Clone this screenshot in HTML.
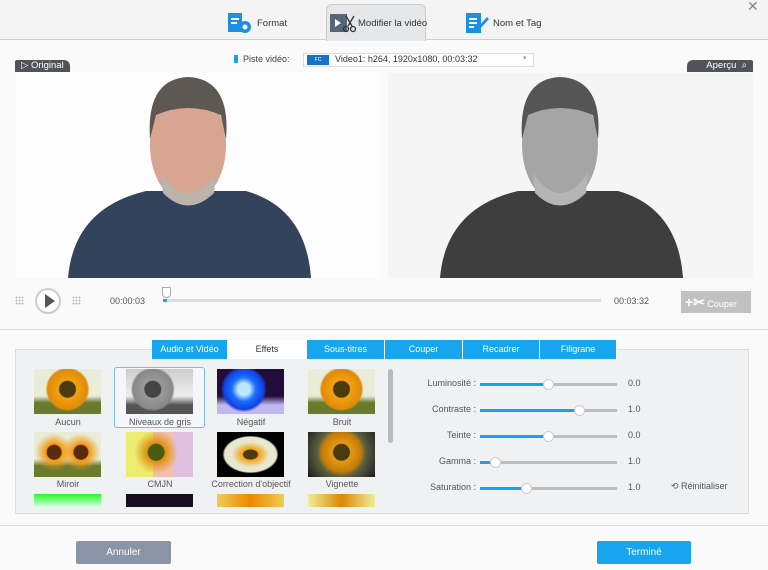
<!DOCTYPE html>
<html><head><meta charset="utf-8"><style>
*{margin:0;padding:0;box-sizing:border-box}
body{width:768px;height:570px;overflow:hidden;background:#fafafa;font-family:"Liberation Sans",sans-serif;font-size:10px;color:#444;position:relative}
.a{position:absolute}
.top{left:0;top:0;width:768px;height:40px;background:#f4f4f4;border-bottom:1px solid #cfcfcf}
.tab{top:5px;height:36px;font-size:9.5px;color:#333;display:flex;align-items:center}
.lab{background:#505358;color:#fff;font-size:9.5px;height:12px;line-height:12px;padding:0 6px}
.thumb{width:67px;height:45px;overflow:hidden}
.tl{width:92px;text-align:center;font-size:9px;color:#555}
.btab{top:340px;height:19px;background:#17a5f0;color:#fff;font-size:9px;text-align:center;line-height:19px;border-right:1px solid #fff}
.sl{height:3px;background:#bdbdbd;width:137px;left:480px}
.sf{height:3px;background:#1ba1f0;left:0;top:0}
.kn{width:11px;height:11px;border-radius:50%;background:#fff;border:1px solid #ccc;top:-4px}
.lb{left:380px;width:96px;text-align:right;font-size:9px;color:#555}
.v{left:628px;font-size:9px;color:#555}
</style></head><body>
<div class="a top"></div>
<div class="a" style="left:326px;top:4px;width:100px;height:37px;background:#e6e7e9;border:1px solid #ccc;border-bottom:none;border-radius:6px 6px 0 0"></div>
<div class="a tab" style="left:227px"><svg width="26" height="22"><rect x="1" y="1" width="14" height="19" fill="#1c8fe0"/><rect x="4" y="6" width="8" height="2" fill="#fff"/><rect x="4" y="10" width="6" height="2" fill="#fff"/><circle cx="18" cy="15" r="6" fill="#1c8fe0"/><circle cx="18" cy="15" r="2.5" fill="#fff"/></svg><span style="margin-left:4px">Format</span></div>
<div class="a tab" style="left:329px"><svg width="28" height="22"><rect x="1" y="2" width="17" height="18" fill="#56657a"/><path d="M6 7l6 4-6 4z" fill="#fff"/><circle cx="17" cy="17" r="2.5" fill="none" stroke="#333" stroke-width="1.3"/><circle cx="24" cy="17" r="2.5" fill="none" stroke="#333" stroke-width="1.3"/><path d="M17 4l6 10M25 4l-6 10" stroke="#333" stroke-width="1.3"/></svg><span style="margin-left:1px">Modifier la vidéo</span></div>
<div class="a tab" style="left:465px"><svg width="26" height="22"><rect x="1" y="1" width="15" height="20" fill="#1c8fe0"/><rect x="4" y="6" width="8" height="2" fill="#fff"/><rect x="4" y="10" width="8" height="2" fill="#fff"/><rect x="4" y="14" width="5" height="2" fill="#fff"/><path d="M12 16l10-11 2 2-10 11z" fill="#1c8fe0"/></svg><span style="margin-left:2px">Nom et Tag</span></div>
<div class="a" style="left:747px;top:-2px;font-size:14px;color:#888">✕</div>

<div class="a lab" style="left:15px;top:60px;border-radius:2px 6px 0 0">▷ Original</div>
<div class="a lab" style="left:687px;top:60px;width:66px;border-radius:6px 2px 0 0;text-align:right">Aperçu &nbsp;⌕</div>
<div class="a" style="left:234px;top:55px;width:4px;height:8px;background:#1ba1f0"></div>
<div class="a" style="left:243px;top:54px;font-size:9px;color:#444">Piste vidéo:</div>
<div class="a" style="left:303px;top:53px;width:231px;height:14px;background:#fff;border:1px solid #ddd"></div>
<div class="a" style="left:307px;top:55px;width:22px;height:10px;background:#1573c8;color:#fff;font-size:5px;text-align:center;line-height:10px">FC</div>
<div class="a" style="left:335px;top:54px;font-size:9px;color:#333">Video1: h264, 1920x1080, 00:03:32</div>
<div class="a" style="left:523px;top:54px;font-size:7px;color:#999">▾</div>

<svg class="a" style="left:16px;top:73px" width="364" height="205"><rect width="364" height="205" fill="#fdfdfd"/><path d="M52 205 Q58 135 130 118 L230 118 Q290 135 295 205Z" fill="#33435c"/><ellipse cx="172" cy="72" rx="38" ry="58" fill="#d7a591"/><path d="M134 66 Q130 6 172 4 Q215 6 210 66 L205 42 Q172 28 140 42Z" fill="#5e5853"/><path d="M145 100 Q172 140 200 100 L198 120 Q172 145 147 120Z" fill="#bdb3aa"/></svg>
<svg class="a" style="left:388px;top:73px" width="365" height="205"><rect width="365" height="205" fill="#f5f5f5"/><path d="M52 205 Q58 135 130 118 L230 118 Q290 135 295 205Z" fill="#3e3e3e"/><ellipse cx="172" cy="72" rx="38" ry="58" fill="#a5a5a5"/><path d="M134 66 Q130 6 172 4 Q215 6 210 66 L205 42 Q172 28 140 42Z" fill="#555"/><path d="M145 100 Q172 140 200 100 L198 120 Q172 145 147 120Z" fill="#b5b5b5"/></svg>

<div class="a" style="left:15px;top:296px;width:9px;height:9px;background:radial-gradient(#bbb 1px,transparent 1px) 0 0/3px 3px"></div>
<div class="a" style="left:72px;top:296px;width:9px;height:9px;background:radial-gradient(#bbb 1px,transparent 1px) 0 0/3px 3px"></div>
<div class="a" style="left:35px;top:288px;width:26px;height:26px;border-radius:50%;background:#fff;border:2px solid #ccc"></div>
<div class="a" style="left:45px;top:294px;width:0;height:0;border-left:10px solid #555;border-top:7px solid transparent;border-bottom:7px solid transparent"></div>
<div class="a" style="left:110px;top:296px;font-size:9px;color:#555">00:00:03</div>
<div class="a" style="left:163px;top:299px;width:438px;height:3px;background:#ddd"></div>
<div class="a" style="left:163px;top:299px;width:4px;height:3px;background:#1ba1f0"></div>
<div class="a" style="left:162px;top:287px;width:9px;height:11px;background:#fff;border:1px solid #aaa;border-radius:0 0 4px 4px"></div>
<div class="a" style="left:614px;top:296px;font-size:9px;color:#555">00:03:32</div>
<div class="a" style="left:681px;top:291px;width:70px;height:22px;background:#c1c1c1;color:#fff;font-size:9px;line-height:22px;padding-left:4px"><b style="font-size:14px">+✂</b> Couper</div>
<div class="a" style="left:0;top:329px;width:768px;height:1px;background:#ddd"></div>

<div class="a" style="left:15px;top:349px;width:734px;height:165px;background:#f0f1f3;border:1px solid #ddd"></div>
<div class="a btab" style="left:152px;width:76px">Audio et Vidéo</div>
<div class="a btab" style="left:228px;width:79px;background:#fff;color:#333">Effets</div>
<div class="a btab" style="left:307px;width:78px">Sous-titres</div>
<div class="a btab" style="left:385px;width:78px">Couper</div>
<div class="a btab" style="left:463px;width:77px">Recadrer</div>
<div class="a btab" style="left:540px;width:77px">Filigrane</div>

<div class="a" style="left:114px;top:367px;width:91px;height:61px;border:1px solid #7fb6ee;border-radius:3px;background:#f4f6f9"></div>
<div class="a thumb" style="left:34px;top:369px;background:radial-gradient(circle at 50% 45%,#4a3a10 8px,#f2a20f 9px,#e08a0a 20px,transparent 22px),linear-gradient(#e8ecd8 60%,#6a7a2e 75%)"></div>
<div class="a thumb" style="left:126px;top:369px;background:radial-gradient(circle at 40% 45%,#444 8px,#999 9px,#888 20px,transparent 22px),linear-gradient(#ccc,#eee 60%,#555 80%)"></div>
<div class="a thumb" style="left:217px;top:369px;background:radial-gradient(circle at 40% 45%,#bde8ff 6px,#1a6eff 12px,#1040e0 20px,transparent 23px),linear-gradient(#220c3a 60%,#c0b8f0 80%)"></div>
<div class="a thumb" style="left:308px;top:369px;background:radial-gradient(circle at 50% 45%,#4a3a10 8px,#f2a20f 9px,#e08a0a 20px,transparent 22px),linear-gradient(#e8ecd8 60%,#6a7a2e 75%)"></div>
<div class="a thumb" style="left:34px;top:432px;background:radial-gradient(circle at 30% 45%,#5a2a10 7px,#f29a0f 8px,transparent 19px),radial-gradient(circle at 70% 45%,#5a2a10 7px,#f29a0f 8px,transparent 19px),linear-gradient(#e8ecd8 60%,#6a7a2e 75%)"></div>
<div class="a thumb" style="left:126px;top:432px;background:radial-gradient(circle at 45% 45%,#4a5a10 8px,#e0900f 9px,transparent 22px),linear-gradient(90deg,#ecec70 40%,#f3c0b0 40%,#f3c0b0 70%,#e0c0e0 70%)"></div>
<div class="a thumb" style="left:217px;top:432px;background:radial-gradient(ellipse at 50% 50%,#4a3a10 7px,#f2a20f 8px,#e8e8d0 19px,#e8e8d0 26px,#000 28px)"></div>
<div class="a thumb" style="left:308px;top:432px;background:radial-gradient(circle at 50% 45%,#4a3a10 8px,#e89a0f 9px,#c07a0a 20px,#5a6040 24px,#222 40px)"></div>
<div class="a" style="left:34px;top:494px;width:67px;height:13px;background:linear-gradient(#2f2,#dfe)"></div>
<div class="a" style="left:126px;top:494px;width:67px;height:13px;background:#151020"></div>
<div class="a" style="left:217px;top:494px;width:67px;height:13px;background:linear-gradient(90deg,#ec5,#e80,#ec5)"></div>
<div class="a" style="left:308px;top:494px;width:67px;height:13px;background:linear-gradient(90deg,#ee9,#d80,#ee9)"></div>
<div class="a tl" style="left:22px;top:417px">Aucun</div>
<div class="a tl" style="left:114px;top:417px">Niveaux de gris</div>
<div class="a tl" style="left:205px;top:417px">Négatif</div>
<div class="a tl" style="left:296px;top:417px">Bruit</div>
<div class="a tl" style="left:22px;top:479px">Miroir</div>
<div class="a tl" style="left:114px;top:479px">CMJN</div>
<div class="a tl" style="left:197px;top:479px;width:108px">Correction d'objectif</div>
<div class="a tl" style="left:296px;top:479px">Vignette</div>
<div class="a" style="left:388px;top:369px;width:5px;height:74px;background:#b9babd;border-radius:3px"></div>

<div class="a lb" style="top:378px">Luminosité :</div>
<div class="a lb" style="top:404px">Contraste :</div>
<div class="a lb" style="top:430px">Teinte :</div>
<div class="a lb" style="top:456px">Gamma :</div>
<div class="a lb" style="top:482px">Saturation :</div>
<div class="a sl" style="top:383px"><div class="a sf" style="width:68px"></div><div class="a kn" style="left:63px"></div></div>
<div class="a sl" style="top:409px"><div class="a sf" style="width:100px"></div><div class="a kn" style="left:94px"></div></div>
<div class="a sl" style="top:435px"><div class="a sf" style="width:68px"></div><div class="a kn" style="left:63px"></div></div>
<div class="a sl" style="top:461px"><div class="a sf" style="width:16px"></div><div class="a kn" style="left:10px"></div></div>
<div class="a sl" style="top:487px"><div class="a sf" style="width:47px"></div><div class="a kn" style="left:41px"></div></div>
<div class="a v" style="top:378px">0.0</div>
<div class="a v" style="top:404px">1.0</div>
<div class="a v" style="top:430px">0.0</div>
<div class="a v" style="top:456px">1.0</div>
<div class="a v" style="top:482px">1.0</div>
<div class="a" style="left:671px;top:481px;font-size:9px;color:#555">⟲ Réinitialiser</div>

<div class="a" style="left:0;top:525px;width:768px;height:1px;background:#ddd"></div>
<div class="a" style="left:76px;top:541px;width:95px;height:23px;background:#8994a6;color:#fff;font-size:10px;text-align:center;line-height:23px;border-radius:2px">Annuler</div>
<div class="a" style="left:597px;top:541px;width:94px;height:23px;background:#17a5f0;color:#fff;font-size:10px;text-align:center;line-height:23px;border-radius:2px">Terminé</div>
</body></html>
